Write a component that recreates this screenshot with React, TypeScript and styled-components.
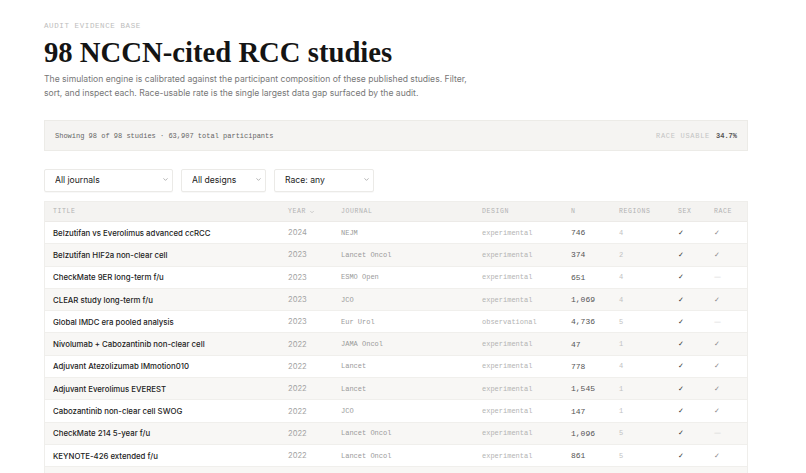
import React from "react";
import styled, { createGlobalStyle } from "styled-components";

const Global = createGlobalStyle`
  * { box-sizing: border-box; }
  html, body { margin: 0; padding: 0; background: #ffffff; }
  body { font-family: Inter, "Noto Sans", sans-serif; color: #1a1a1a; }
`;

const MONO = `"Liberation Mono", "DejaVu Sans Mono", monospace`;

const Page = styled.div`
  padding: 21px 58px 0 44px;
  width: 806px;
`;

const Eyebrow = styled.div`
  font-family: ${MONO};
  font-size: 7.5px;
  line-height: 10px;
  letter-spacing: 0.6px;
  color: #bdbdbd;
  text-transform: uppercase;
`;

const Title = styled.h1`
  margin: 5px 0 0;
  font-family: "Liberation Serif", "DejaVu Serif", serif;
  font-weight: 700;
  font-size: 28.7px;
  line-height: 32px;
  color: #141414;
`;

const Lede = styled.p`
  margin: 4px 0 0;
  font-size: 8.6px;
  line-height: 14px;
  color: #777;
  max-width: 440px;
`;

const Stats = styled.div`
  margin-top: 20px;
  height: 31px;
  background: #f5f4f2;
  border: 1px solid #ecebe7;
  display: flex;
  align-items: center;
  justify-content: space-between;
  padding: 0 10px;
  font-family: ${MONO};
  font-size: 7px;
`;

const StatText = styled.span`
  color: #666;
`;

const StatRight = styled.span`
  display: flex;
  gap: 6px;
  align-items: baseline;
`;

const StatLabel = styled.span`
  color: #c4c4c4;
  letter-spacing: 0.7px;
`;

const StatValue = styled.span`
  color: #555;
  font-weight: 700;
`;

const Filters = styled.div`
  margin-top: 16px;
  display: flex;
  gap: 8px;
`;

const SelectWrap = styled.div<{ $w: number }>`
  position: relative;
  width: ${(p) => p.$w}px;
  height: 23px;
`;

const Select = styled.select`
  appearance: none;
  -webkit-appearance: none;
  width: 100%;
  height: 100%;
  border: 1px solid #ebeae7;
  border-radius: 2px;
  background: #fff;
  box-shadow: 0 1px 1px rgba(0, 0, 0, 0.03);
  padding: 0 16px 0 10px;
  font-family: Inter, "Noto Sans", sans-serif;
  font-size: 8.6px;
  color: #222;
  outline: none;
`;

const Chevron = styled.svg`
  position: absolute;
  right: 4px;
  top: 9px;
  pointer-events: none;
`;

const Table = styled.div`
  margin-top: 11px;
  border: 1px solid #efeeeb;
  border-bottom: none;
`;

const COLS = "235px 53px 141px 89px 48px 59px 36px 1fr";

const HeadRow = styled.div`
  display: grid;
  grid-template-columns: ${COLS};
  height: 20px;
  align-items: center;
  background: #f4f3f1;
  border-bottom: 1px solid #eceae7;
`;

const Th = styled.div`
  padding-left: 8px;
  font-family: ${MONO};
  font-size: 6.5px;
  letter-spacing: 0.6px;
  color: #b2b2b2;
  text-transform: uppercase;
  display: flex;
  align-items: center;
  gap: 3px;
`;

const Row = styled.div<{ $alt: boolean }>`
  display: grid;
  grid-template-columns: ${COLS};
  height: 22.3px;
  align-items: center;
  background: ${(p) => (p.$alt ? "#f8f7f5" : "#ffffff")};
  border-bottom: 1px solid #f0efec;
`;

const Cell = styled.div`
  padding-left: 8px;
  white-space: nowrap;
  overflow: hidden;
`;

const TitleCell = styled(Cell)`
  font-size: 7.8px;
  font-weight: 500;
  color: #222;
`;

const YearCell = styled(Cell)`
  font-size: 7.6px;
  color: #a3a3a3;
`;

const MonoCell = styled(Cell)<{ $c: string; $s?: number }>`
  font-family: ${MONO};
  font-size: ${(p) => p.$s ?? 7}px;
  color: ${(p) => p.$c};
`;

const Mark = styled(Cell)<{ $c: string }>`
  font-family: "DejaVu Sans", sans-serif;
  font-size: 7px;
  color: ${(p) => p.$c};
`;

type Study = [string, number, string, string, string, number, boolean, boolean];

const studies: Study[] = [
  ["Belzutifan vs Everolimus advanced ccRCC", 2024, "NEJM", "experimental", "746", 4, true, true],
  ["Belzutifan HIF2a non-clear cell", 2023, "Lancet Oncol", "experimental", "374", 2, true, true],
  ["CheckMate 9ER long-term f/u", 2023, "ESMO Open", "experimental", "651", 4, true, false],
  ["CLEAR study long-term f/u", 2023, "JCO", "experimental", "1,069", 4, true, true],
  ["Global IMDC era pooled analysis", 2023, "Eur Urol", "observational", "4,736", 5, true, false],
  ["Nivolumab + Cabozantinib non-clear cell", 2022, "JAMA Oncol", "experimental", "47", 1, true, true],
  ["Adjuvant Atezolizumab IMmotion010", 2022, "Lancet", "experimental", "778", 4, true, true],
  ["Adjuvant Everolimus EVEREST", 2022, "Lancet", "experimental", "1,545", 1, true, true],
  ["Cabozantinib non-clear cell SWOG", 2022, "JCO", "experimental", "147", 1, true, true],
  ["CheckMate 214 5-year f/u", 2022, "Lancet Oncol", "experimental", "1,096", 5, true, false],
  ["KEYNOTE-426 extended f/u", 2022, "Lancet Oncol", "experimental", "861", 5, true, true],
  ["Sunitinib vs Pazopanib COMPARZ update", 2022, "Eur Urol", "experimental", "1,110", 4, true, true],
];

const Down = ({ size = 8, color = "#999" }: { size?: number; color?: string }) => (
  <svg width={size} height={size} viewBox="0 0 24 24" fill="none" stroke={color} strokeWidth={2.5} strokeLinecap="round" strokeLinejoin="round">
    <path d="m6 9 6 6 6-6" />
  </svg>
);

const Filter = ({ w, label }: { w: number; label: string }) => (
  <SelectWrap $w={w}>
    <Select defaultValue={label}>
      <option>{label}</option>
    </Select>
    <Chevron width={7} height={7} viewBox="0 0 24 24" fill="none" stroke="#999" strokeWidth={2.5} strokeLinecap="round" strokeLinejoin="round">
      <path d="m6 9 6 6 6-6" />
    </Chevron>
  </SelectWrap>
);

export default function App() {
  return (
    <>
      <Global />
      <Page>
        <Eyebrow>Audit evidence base</Eyebrow>
        <Title>98 NCCN-cited RCC studies</Title>
        <Lede>
          The simulation engine is calibrated against the participant composition of these published studies. Filter,
          sort, and inspect each. Race-usable rate is the single largest data gap surfaced by the audit.
        </Lede>
        <Stats>
          <StatText>Showing 98 of 98 studies · 63,907 total participants</StatText>
          <StatRight>
            <StatLabel>RACE USABLE</StatLabel>
            <StatValue>34.7%</StatValue>
          </StatRight>
        </Stats>
        <Filters>
          <Filter w={129} label="All journals" />
          <Filter w={85} label="All designs" />
          <Filter w={100} label="Race: any" />
        </Filters>
        <Table>
          <HeadRow>
            <Th>Title</Th>
            <Th>
              Year <Down size={6} color="#b2b2b2" />
            </Th>
            <Th>Journal</Th>
            <Th>Design</Th>
            <Th>N</Th>
            <Th>Regions</Th>
            <Th>Sex</Th>
            <Th>Race</Th>
          </HeadRow>
          {studies.map((s, i) => (
            <Row key={s[0]} $alt={i % 2 === 1}>
              <TitleCell>{s[0]}</TitleCell>
              <YearCell>{s[1]}</YearCell>
              <MonoCell $c="#9a9a9a">{s[2]}</MonoCell>
              <MonoCell $c="#b3b3b3">{s[3]}</MonoCell>
              <MonoCell $c="#555" $s={8}>{s[4]}</MonoCell>
              <MonoCell $c="#c2c2c2">{s[5]}</MonoCell>
              <Mark $c="#333">{s[6] ? "✓" : "—"}</Mark>
              <Mark $c={s[7] ? "#8a8a8a" : "#cfcfcf"}>{s[7] ? "✓" : "—"}</Mark>
            </Row>
          ))}
        </Table>
      </Page>
    </>
  );
}
